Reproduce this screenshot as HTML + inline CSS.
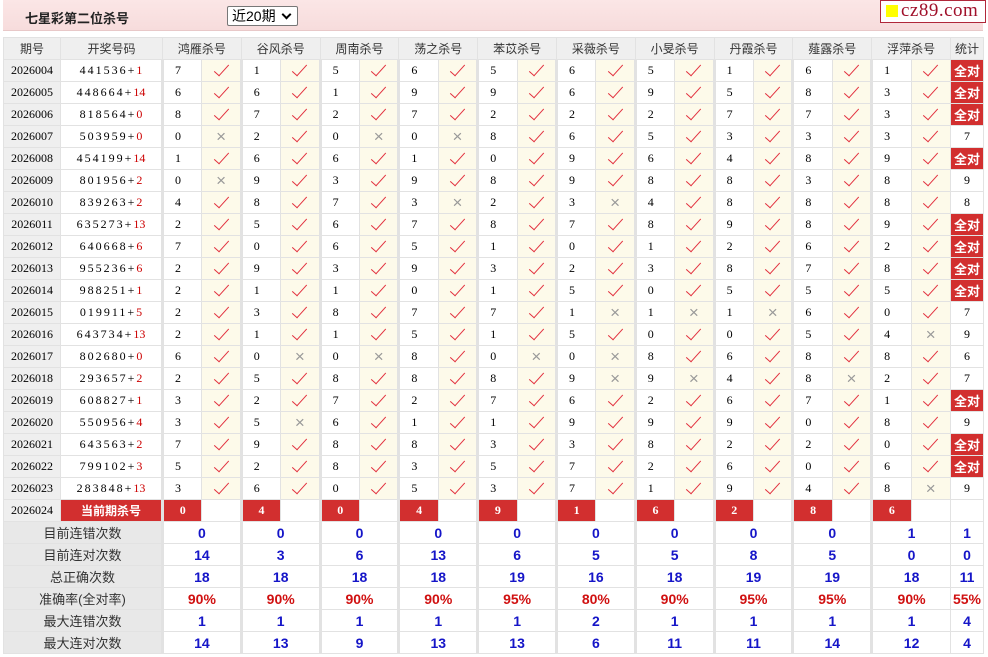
<!DOCTYPE html>
<html><head><meta charset="utf-8">
<style>
body{margin:0;background:#fff;font-family:"Liberation Serif","Noto Serif CJK SC",serif;width:988px;height:657px;overflow:hidden;position:relative}
.top{position:absolute;left:3px;top:0;width:980px;height:30px;background:linear-gradient(#fbe6e6,#f7dcdc);border-bottom:1px solid #e8c8c8}
.title{position:absolute;left:22px;top:8px;font:bold 13px "Liberation Sans","Noto Sans CJK SC",sans-serif;color:#222}
.sel{position:absolute;left:224px;top:6px;width:69px;height:18px;border:1px solid #777;border-radius:2px;background:#fff;font:14px "Liberation Sans","Noto Sans CJK SC",sans-serif;line-height:18px;padding-left:4px;box-sizing:border-box;width:71px;height:20px}
.sel:after{content:"";position:absolute;right:7px;top:4px;width:5px;height:5px;border:solid #000;border-width:0 2px 2px 0;transform:rotate(45deg)}
.logo{position:absolute;left:880px;top:0;width:104px;height:21px;border:1px solid #b0283a;background:#fff;font:19px "Liberation Serif",serif;color:#a0102a;line-height:20px;letter-spacing:0.5px}
.logo i{display:inline-block;width:12px;height:12px;background:#ff0;margin:0 3px 0 5px;vertical-align:-1px}
table{position:absolute;left:3px;top:37px;border-collapse:collapse;table-layout:fixed;width:980px}
td{height:21px;border:1px solid #e2e2e2;padding:0;font-size:12px;text-align:center;color:#000;white-space:nowrap;overflow:hidden}
tr.h td{background:#efefef;font:12px "Liberation Sans","Noto Sans CJK SC",sans-serif;color:#333}
td.p{background:#efefef;font-size:12px}
td.d{letter-spacing:2px;font-size:12px}
td.d b{font-weight:normal;color:#c00;letter-spacing:0}
td.n{border-left:3px solid #e2e2e2;text-align:left;padding-left:11px}
td.y,td.x{background:#fdfaea}
td.y:after{content:"";display:inline-block;width:6px;height:14px;border:solid #e2303e;border-width:0 1.6px 1.6px 0;transform:rotate(42deg);margin-top:-6px;vertical-align:middle}
td.x{color:#999;font:17px "Liberation Sans",sans-serif}
td.s{font:bold 12px "Liberation Sans","Noto Sans CJK SC",sans-serif}
td.a{background:#d22f2f;color:#fff;font:bold 12px "Liberation Sans","Noto Sans CJK SC",sans-serif}
td.r{background:#d22f2f;color:#fff;font-weight:bold;border-left:3px solid #e2e2e2;text-align:center;padding:0}
td.w{background:#fff}
td.c{background:#d22f2f;color:#fff;font:bold 13px "Liberation Sans","Noto Sans CJK SC",sans-serif}
tr.t td{background:#fff;color:#1515c8;font:bold 14px "Liberation Sans",sans-serif}
tr.t td.l{background:#e8e8e8;color:#333;font:13px "Liberation Sans","Noto Sans CJK SC",sans-serif}
tr.t td.g{border-left:3px solid #e2e2e2}
tr.q td{color:#d01010}
</style></head><body>
<div class="top"><div class="title">七星彩第二位杀号</div><div class="sel">近20期</div></div>
<div class="logo"><i></i>cz89.com</div>
<table>
<colgroup><col style="width:57px"><col style="width:102px"><col span="20" style="width:39.4px"><col style="width:33px"></colgroup>
<tr class="h"><td>期号</td><td>开奖号码</td><td colspan="2">鸿雁杀号</td><td colspan="2">谷风杀号</td><td colspan="2">周南杀号</td><td colspan="2">荡之杀号</td><td colspan="2">苯苡杀号</td><td colspan="2">采薇杀号</td><td colspan="2">小旻杀号</td><td colspan="2">丹霞杀号</td><td colspan="2">薤露杀号</td><td colspan="2">浮萍杀号</td><td>统计</td></tr>
<tr><td class="p">2026004</td><td class="d">441536+<b>1</b></td><td class="n">7</td><td class="y"></td><td class="n">1</td><td class="y"></td><td class="n">5</td><td class="y"></td><td class="n">6</td><td class="y"></td><td class="n">5</td><td class="y"></td><td class="n">6</td><td class="y"></td><td class="n">5</td><td class="y"></td><td class="n">1</td><td class="y"></td><td class="n">6</td><td class="y"></td><td class="n">1</td><td class="y"></td><td class="c">全对</td></tr>
<tr><td class="p">2026005</td><td class="d">448664+<b>14</b></td><td class="n">6</td><td class="y"></td><td class="n">6</td><td class="y"></td><td class="n">1</td><td class="y"></td><td class="n">9</td><td class="y"></td><td class="n">9</td><td class="y"></td><td class="n">6</td><td class="y"></td><td class="n">9</td><td class="y"></td><td class="n">5</td><td class="y"></td><td class="n">8</td><td class="y"></td><td class="n">3</td><td class="y"></td><td class="c">全对</td></tr>
<tr><td class="p">2026006</td><td class="d">818564+<b>0</b></td><td class="n">8</td><td class="y"></td><td class="n">7</td><td class="y"></td><td class="n">2</td><td class="y"></td><td class="n">7</td><td class="y"></td><td class="n">2</td><td class="y"></td><td class="n">2</td><td class="y"></td><td class="n">2</td><td class="y"></td><td class="n">7</td><td class="y"></td><td class="n">7</td><td class="y"></td><td class="n">3</td><td class="y"></td><td class="c">全对</td></tr>
<tr><td class="p">2026007</td><td class="d">503959+<b>0</b></td><td class="n">0</td><td class="x">×</td><td class="n">2</td><td class="y"></td><td class="n">0</td><td class="x">×</td><td class="n">0</td><td class="x">×</td><td class="n">8</td><td class="y"></td><td class="n">6</td><td class="y"></td><td class="n">5</td><td class="y"></td><td class="n">3</td><td class="y"></td><td class="n">3</td><td class="y"></td><td class="n">3</td><td class="y"></td><td>7</td></tr>
<tr><td class="p">2026008</td><td class="d">454199+<b>14</b></td><td class="n">1</td><td class="y"></td><td class="n">6</td><td class="y"></td><td class="n">6</td><td class="y"></td><td class="n">1</td><td class="y"></td><td class="n">0</td><td class="y"></td><td class="n">9</td><td class="y"></td><td class="n">6</td><td class="y"></td><td class="n">4</td><td class="y"></td><td class="n">8</td><td class="y"></td><td class="n">9</td><td class="y"></td><td class="c">全对</td></tr>
<tr><td class="p">2026009</td><td class="d">801956+<b>2</b></td><td class="n">0</td><td class="x">×</td><td class="n">9</td><td class="y"></td><td class="n">3</td><td class="y"></td><td class="n">9</td><td class="y"></td><td class="n">8</td><td class="y"></td><td class="n">9</td><td class="y"></td><td class="n">8</td><td class="y"></td><td class="n">8</td><td class="y"></td><td class="n">3</td><td class="y"></td><td class="n">8</td><td class="y"></td><td>9</td></tr>
<tr><td class="p">2026010</td><td class="d">839263+<b>2</b></td><td class="n">4</td><td class="y"></td><td class="n">8</td><td class="y"></td><td class="n">7</td><td class="y"></td><td class="n">3</td><td class="x">×</td><td class="n">2</td><td class="y"></td><td class="n">3</td><td class="x">×</td><td class="n">4</td><td class="y"></td><td class="n">8</td><td class="y"></td><td class="n">8</td><td class="y"></td><td class="n">8</td><td class="y"></td><td>8</td></tr>
<tr><td class="p">2026011</td><td class="d">635273+<b>13</b></td><td class="n">2</td><td class="y"></td><td class="n">5</td><td class="y"></td><td class="n">6</td><td class="y"></td><td class="n">7</td><td class="y"></td><td class="n">8</td><td class="y"></td><td class="n">7</td><td class="y"></td><td class="n">8</td><td class="y"></td><td class="n">9</td><td class="y"></td><td class="n">8</td><td class="y"></td><td class="n">9</td><td class="y"></td><td class="c">全对</td></tr>
<tr><td class="p">2026012</td><td class="d">640668+<b>6</b></td><td class="n">7</td><td class="y"></td><td class="n">0</td><td class="y"></td><td class="n">6</td><td class="y"></td><td class="n">5</td><td class="y"></td><td class="n">1</td><td class="y"></td><td class="n">0</td><td class="y"></td><td class="n">1</td><td class="y"></td><td class="n">2</td><td class="y"></td><td class="n">6</td><td class="y"></td><td class="n">2</td><td class="y"></td><td class="c">全对</td></tr>
<tr><td class="p">2026013</td><td class="d">955236+<b>6</b></td><td class="n">2</td><td class="y"></td><td class="n">9</td><td class="y"></td><td class="n">3</td><td class="y"></td><td class="n">9</td><td class="y"></td><td class="n">3</td><td class="y"></td><td class="n">2</td><td class="y"></td><td class="n">3</td><td class="y"></td><td class="n">8</td><td class="y"></td><td class="n">7</td><td class="y"></td><td class="n">8</td><td class="y"></td><td class="c">全对</td></tr>
<tr><td class="p">2026014</td><td class="d">988251+<b>1</b></td><td class="n">2</td><td class="y"></td><td class="n">1</td><td class="y"></td><td class="n">1</td><td class="y"></td><td class="n">0</td><td class="y"></td><td class="n">1</td><td class="y"></td><td class="n">5</td><td class="y"></td><td class="n">0</td><td class="y"></td><td class="n">5</td><td class="y"></td><td class="n">5</td><td class="y"></td><td class="n">5</td><td class="y"></td><td class="c">全对</td></tr>
<tr><td class="p">2026015</td><td class="d">019911+<b>5</b></td><td class="n">2</td><td class="y"></td><td class="n">3</td><td class="y"></td><td class="n">8</td><td class="y"></td><td class="n">7</td><td class="y"></td><td class="n">7</td><td class="y"></td><td class="n">1</td><td class="x">×</td><td class="n">1</td><td class="x">×</td><td class="n">1</td><td class="x">×</td><td class="n">6</td><td class="y"></td><td class="n">0</td><td class="y"></td><td>7</td></tr>
<tr><td class="p">2026016</td><td class="d">643734+<b>13</b></td><td class="n">2</td><td class="y"></td><td class="n">1</td><td class="y"></td><td class="n">1</td><td class="y"></td><td class="n">5</td><td class="y"></td><td class="n">1</td><td class="y"></td><td class="n">5</td><td class="y"></td><td class="n">0</td><td class="y"></td><td class="n">0</td><td class="y"></td><td class="n">5</td><td class="y"></td><td class="n">4</td><td class="x">×</td><td>9</td></tr>
<tr><td class="p">2026017</td><td class="d">802680+<b>0</b></td><td class="n">6</td><td class="y"></td><td class="n">0</td><td class="x">×</td><td class="n">0</td><td class="x">×</td><td class="n">8</td><td class="y"></td><td class="n">0</td><td class="x">×</td><td class="n">0</td><td class="x">×</td><td class="n">8</td><td class="y"></td><td class="n">6</td><td class="y"></td><td class="n">8</td><td class="y"></td><td class="n">8</td><td class="y"></td><td>6</td></tr>
<tr><td class="p">2026018</td><td class="d">293657+<b>2</b></td><td class="n">2</td><td class="y"></td><td class="n">5</td><td class="y"></td><td class="n">8</td><td class="y"></td><td class="n">8</td><td class="y"></td><td class="n">8</td><td class="y"></td><td class="n">9</td><td class="x">×</td><td class="n">9</td><td class="x">×</td><td class="n">4</td><td class="y"></td><td class="n">8</td><td class="x">×</td><td class="n">2</td><td class="y"></td><td>7</td></tr>
<tr><td class="p">2026019</td><td class="d">608827+<b>1</b></td><td class="n">3</td><td class="y"></td><td class="n">2</td><td class="y"></td><td class="n">7</td><td class="y"></td><td class="n">2</td><td class="y"></td><td class="n">7</td><td class="y"></td><td class="n">6</td><td class="y"></td><td class="n">2</td><td class="y"></td><td class="n">6</td><td class="y"></td><td class="n">7</td><td class="y"></td><td class="n">1</td><td class="y"></td><td class="c">全对</td></tr>
<tr><td class="p">2026020</td><td class="d">550956+<b>4</b></td><td class="n">3</td><td class="y"></td><td class="n">5</td><td class="x">×</td><td class="n">6</td><td class="y"></td><td class="n">1</td><td class="y"></td><td class="n">1</td><td class="y"></td><td class="n">9</td><td class="y"></td><td class="n">9</td><td class="y"></td><td class="n">9</td><td class="y"></td><td class="n">0</td><td class="y"></td><td class="n">8</td><td class="y"></td><td>9</td></tr>
<tr><td class="p">2026021</td><td class="d">643563+<b>2</b></td><td class="n">7</td><td class="y"></td><td class="n">9</td><td class="y"></td><td class="n">8</td><td class="y"></td><td class="n">8</td><td class="y"></td><td class="n">3</td><td class="y"></td><td class="n">3</td><td class="y"></td><td class="n">8</td><td class="y"></td><td class="n">2</td><td class="y"></td><td class="n">2</td><td class="y"></td><td class="n">0</td><td class="y"></td><td class="c">全对</td></tr>
<tr><td class="p">2026022</td><td class="d">799102+<b>3</b></td><td class="n">5</td><td class="y"></td><td class="n">2</td><td class="y"></td><td class="n">8</td><td class="y"></td><td class="n">3</td><td class="y"></td><td class="n">5</td><td class="y"></td><td class="n">7</td><td class="y"></td><td class="n">2</td><td class="y"></td><td class="n">6</td><td class="y"></td><td class="n">0</td><td class="y"></td><td class="n">6</td><td class="y"></td><td class="c">全对</td></tr>
<tr><td class="p">2026023</td><td class="d">283848+<b>13</b></td><td class="n">3</td><td class="y"></td><td class="n">6</td><td class="y"></td><td class="n">0</td><td class="y"></td><td class="n">5</td><td class="y"></td><td class="n">3</td><td class="y"></td><td class="n">7</td><td class="y"></td><td class="n">1</td><td class="y"></td><td class="n">9</td><td class="y"></td><td class="n">4</td><td class="y"></td><td class="n">8</td><td class="x">×</td><td>9</td></tr>
<tr><td class="p">2026024</td><td class="a">当前期杀号</td><td class="r">0</td><td class="w"></td><td class="r">4</td><td class="w"></td><td class="r">0</td><td class="w"></td><td class="r">4</td><td class="w"></td><td class="r">9</td><td class="w"></td><td class="r">1</td><td class="w"></td><td class="r">6</td><td class="w"></td><td class="r">2</td><td class="w"></td><td class="r">8</td><td class="w"></td><td class="r">6</td><td class="w"></td><td class="w"></td></tr>
<tr class="t"><td class="l" colspan="2">目前连错次数</td><td class="g" colspan="2">0</td><td class="g" colspan="2">0</td><td class="g" colspan="2">0</td><td class="g" colspan="2">0</td><td class="g" colspan="2">0</td><td class="g" colspan="2">0</td><td class="g" colspan="2">0</td><td class="g" colspan="2">0</td><td class="g" colspan="2">0</td><td class="g" colspan="2">1</td><td>1</td></tr>
<tr class="t"><td class="l" colspan="2">目前连对次数</td><td class="g" colspan="2">14</td><td class="g" colspan="2">3</td><td class="g" colspan="2">6</td><td class="g" colspan="2">13</td><td class="g" colspan="2">6</td><td class="g" colspan="2">5</td><td class="g" colspan="2">5</td><td class="g" colspan="2">8</td><td class="g" colspan="2">5</td><td class="g" colspan="2">0</td><td>0</td></tr>
<tr class="t"><td class="l" colspan="2">总正确次数</td><td class="g" colspan="2">18</td><td class="g" colspan="2">18</td><td class="g" colspan="2">18</td><td class="g" colspan="2">18</td><td class="g" colspan="2">19</td><td class="g" colspan="2">16</td><td class="g" colspan="2">18</td><td class="g" colspan="2">19</td><td class="g" colspan="2">19</td><td class="g" colspan="2">18</td><td>11</td></tr>
<tr class="t q"><td class="l" colspan="2">准确率(全对率)</td><td class="g" colspan="2">90%</td><td class="g" colspan="2">90%</td><td class="g" colspan="2">90%</td><td class="g" colspan="2">90%</td><td class="g" colspan="2">95%</td><td class="g" colspan="2">80%</td><td class="g" colspan="2">90%</td><td class="g" colspan="2">95%</td><td class="g" colspan="2">95%</td><td class="g" colspan="2">90%</td><td>55%</td></tr>
<tr class="t"><td class="l" colspan="2">最大连错次数</td><td class="g" colspan="2">1</td><td class="g" colspan="2">1</td><td class="g" colspan="2">1</td><td class="g" colspan="2">1</td><td class="g" colspan="2">1</td><td class="g" colspan="2">2</td><td class="g" colspan="2">1</td><td class="g" colspan="2">1</td><td class="g" colspan="2">1</td><td class="g" colspan="2">1</td><td>4</td></tr>
<tr class="t"><td class="l" colspan="2">最大连对次数</td><td class="g" colspan="2">14</td><td class="g" colspan="2">13</td><td class="g" colspan="2">9</td><td class="g" colspan="2">13</td><td class="g" colspan="2">13</td><td class="g" colspan="2">6</td><td class="g" colspan="2">11</td><td class="g" colspan="2">11</td><td class="g" colspan="2">14</td><td class="g" colspan="2">12</td><td>4</td></tr>
</table>
</body></html>
